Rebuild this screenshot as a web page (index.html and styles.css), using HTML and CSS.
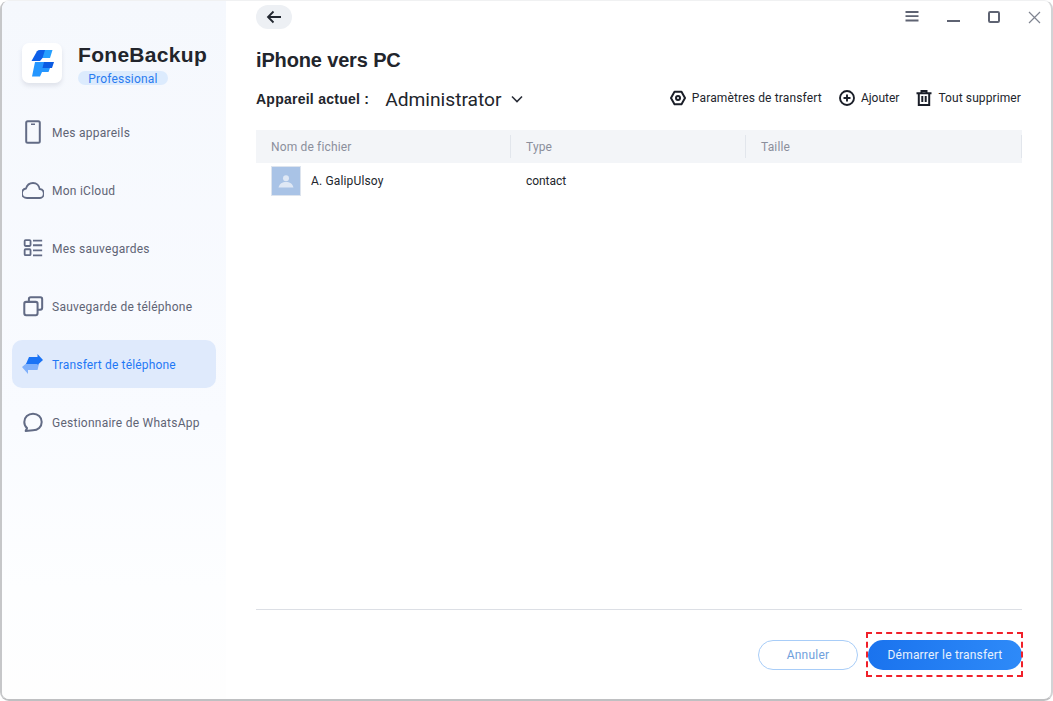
FILE: index.html
```html
<!DOCTYPE html>
<html lang="fr">
<head>
<meta charset="utf-8">
<title>FoneBackup</title>
<link rel="stylesheet" href="styles.css">
</head>
<body>
<div class="window">
  <aside class="sidebar">
    <div class="brand">
      <div class="logo">
        <svg width="24" height="30" viewBox="0 0 24 30">
          <path d="M11 2H22.500L20 10H8Z" fill="#27a0ff"/>
          <path d="M7 3.200Q8 2 10 2H15L12.500 10L10 13H1.500Z" fill="#0d5fe8"/>
          <path d="M13 14H24L22 20H11Z" fill="#0b5be2"/>
          <path d="M5 14H14L12.500 20H20L18.500 24H12L10 28.500H2Z" fill="#2496ff"/>
        </svg>
      </div>
      <div class="brand-text">
        <div class="brand-name">FoneBackup</div>
        <div class="badge">Professional</div>
      </div>
    </div>
    <nav class="nav">
      <a class="nav-item">
        <svg class="nav-icon" viewBox="0 0 20 24"><rect x="3.200" y="1.200" width="13.600" height="21.600" rx="1.500" fill="none" stroke="#626b85" stroke-width="2"/><path d="M8 4.200h4" stroke="#626b85" stroke-width="1.600"/></svg>
        <span>Mes appareils</span>
      </a>
      <a class="nav-item">
        <svg class="nav-icon" viewBox="1 0 22 24"><path d="M6 20C3 20 1 18 1 15.500C1 12.500 3 10.800 5 10.500C6 7 8.600 5 12 5C15.600 5 18.200 7.600 18.600 11C21 11.200 22.800 13 22.800 15.500C22.800 18 21 20 19 20Z" fill="none" stroke="#626b85" stroke-width="1.800"/></svg>
        <span>Mon iCloud</span>
      </a>
      <a class="nav-item">
        <svg class="nav-icon" viewBox="0 0 24 24"><g fill="none" stroke="#626b85" stroke-width="2"><rect x="2.900" y="3.400" width="6.400" height="6.400" rx="1"/><rect x="2.900" y="13.400" width="6.400" height="6.400" rx="1"/><path d="M12 3.900h10M12 9h10M12 14.500h10M12 20h10"/></g></svg>
        <span>Mes sauvegardes</span>
      </a>
      <a class="nav-item">
        <svg class="nav-icon" viewBox="0 0 24 24"><g fill="none" stroke="#626b85" stroke-width="2.200"><rect x="2.500" y="7.500" width="14.500" height="14.500" rx="2"/><path d="M7.500 7.500V4.500a2 2 0 0 1 2-2H20a2 2 0 0 1 2 2V14a2 2 0 0 1-2 2H17"/></g></svg>
        <span>Sauvegarde de téléphone</span>
      </a>
      <a class="nav-item active">
        <svg class="nav-icon" viewBox="0 0 22 24"><path d="M0 15L6 10V12H17L15.500 18H6V22Z" fill="#7fb0fb"/><path d="M7 5H15.500V2L21 8L15.500 13V12H4Z" fill="#1a73f5"/></svg>
        <span>Transfert de téléphone</span>
      </a>
      <a class="nav-item">
        <svg class="nav-icon" viewBox="0 0 24 24"><path d="M5.500 18.500C3.500 16.900 2.500 14.600 2.500 12C2.500 6.800 6.700 3 12 3C17.300 3 21.500 6.800 21.500 12C21.500 17.200 17.300 21 12 21L4 21.800Z" fill="none" stroke="#626b85" stroke-width="2.200" stroke-linejoin="round"/></svg>
        <span>Gestionnaire de WhatsApp</span>
      </a>
    </nav>
  </aside>
  <main class="main">
    <div class="topbar">
      <button class="back" aria-label="Retour">
        <svg width="16" height="14" viewBox="0 0 16 14"><path d="M15 7H2M7.500 1.500L2 7l5.500 5.500" fill="none" stroke="#222730" stroke-width="1.800"/></svg>
      </button>
      <div class="win-controls">
        <svg width="14" height="11" viewBox="0 0 14 11"><path d="M0.500 1h13M0.500 5.200h13M0.500 9.500h13" stroke="#5e6372" stroke-width="1.800"/></svg>
        <svg width="13" height="11" viewBox="0 0 13 11"><path d="M0 10h13" stroke="#5e6372" stroke-width="1.800"/></svg>
        <svg width="12" height="12" viewBox="0 0 12 12"><rect x="1" y="1" width="10" height="10" rx="1.200" fill="none" stroke="#5e6372" stroke-width="2"/></svg>
        <svg width="13" height="13" viewBox="0 0 13 13"><path d="M1 1l11 11M12 1L1 12" stroke="#7f8490" stroke-width="1.200"/></svg>
      </div>
    </div>
    <h1 class="title">iPhone vers PC</h1>
    <div class="toolbar">
      <span class="device-label">Appareil actuel :</span>
      <span class="device-name">Administrator</span>
      <svg class="chevron" width="12" height="8" viewBox="0 0 12 8"><path d="M1 1.500l5 5 5-5" fill="none" stroke="#2a2e38" stroke-width="1.600"/></svg>
      <div class="actions">
        <span class="action action-wide">
          <svg width="16" height="16" viewBox="0 0 16 16"><path d="M4.500 1.800h7L15 8l-3.500 6.200h-7L1 8Z" fill="none" stroke="#1a1e28" stroke-width="2" stroke-linejoin="round"/><circle cx="8" cy="8" r="2" fill="none" stroke="#1a1e28" stroke-width="2"/></svg>
          Paramètres de transfert
        </span>
        <span class="action action-tight">
          <svg width="16" height="16" viewBox="0 0 16 16"><circle cx="8" cy="8" r="7" fill="none" stroke="#1a1e28" stroke-width="1.900"/><path d="M4.500 8h7M8 4.500v7" stroke="#1a1e28" stroke-width="1.900"/></svg>
          Ajouter
        </span>
        <span class="action">
          <svg width="16" height="16" viewBox="0 0 16 16"><path d="M0.500 3.200h15M5.500 3V1h5v2M2.800 3.500V15h10.400V3.500M6.300 6v6M9.700 6v6" fill="none" stroke="#1a1e28" stroke-width="2"/></svg>
          Tout supprimer
        </span>
      </div>
    </div>
    <div class="table">
      <div class="table-head">
        <div class="col col-name"><span class="nudge">Nom de fichier</span></div>
        <div class="col col-type"><span class="nudge">Type</span></div>
        <div class="col col-size"><span class="nudge">Taille</span></div>
      </div>
      <div class="table-row">
        <div class="cell col-name">
          <div class="avatar">
            <svg width="30" height="30" viewBox="0 0 30 30"><rect width="30" height="30" fill="#a9c3e6"/><circle cx="15" cy="12" r="3.200" fill="#dfe8f5"/><path d="M7 22c1-4.500 4-6 8-6s7 1.500 8 6Z" fill="#dfe8f5"/></svg>
          </div>
          <span class="contact-name">A. GalipUlsoy</span>
        </div>
        <div class="cell col-type type-cell">contact</div>
        <div class="cell col-size"></div>
      </div>
    </div>
    <div class="footer">
      <button class="btn btn-ghost">Annuler</button>
      <button class="btn btn-primary">Démarrer le transfert<span class="highlight"></span></button>
    </div>
  </main>
</div>
</body>
</html>
```
FILE: styles.css
```css
* { box-sizing: border-box; }
html, body { margin: 0; height: 100%; background: #fff; }
body { font-family: Roboto, "Liberation Sans", sans-serif; color: #1f2430; }
.window {
  width: 1053px; height: 701px;
  display: flex;
  background: #fff;
  border-left: 2px solid #c6c7c9;
  border-right: 2px solid #d2d3d5;
  border-bottom: 2px solid #bfc0c2;
  border-top: 1px solid #f0f1f2;
  border-radius: 9px;
  overflow: hidden;
}
.sidebar {
  width: 224px; flex: none;
  padding: 42px 10px 0;
  background: linear-gradient(180deg, #f5f8fd 0%, #f9fbff 60%, #fdfeff 84%, #fefefe 100%);
}
.brand { display: flex; align-items: flex-start; gap: 16px; padding-left: 10px; height: 65px; }
.logo {
  width: 40px; height: 40px; flex: none;
  display: flex; align-items: center; justify-content: center;
  background: #fff; border-radius: 7px;
  box-shadow: 0 3px 4px rgba(120,130,150,.18);
}
.brand-text { display: flex; flex-direction: column; align-items: flex-start; }
.brand-name { font-family: "Liberation Sans", sans-serif; font-size: 21px; font-weight: 700; letter-spacing: .3px; line-height: 26px; margin-top: -1px; color: #22252c; }
.badge {
  width: 90px; height: 14px; margin-top: 3px;
  background: #dcebfd; border-radius: 7px;
  color: #2a7bf0; font-size: 12px; line-height: 17px; text-align: center; letter-spacing: .2px;
}
.nav { display: flex; flex-direction: column; gap: 10px; }
.nav-item {
  height: 48px; width: 204px;
  display: flex; align-items: center; gap: 8px;
  padding-left: 10px; border-radius: 10px;
  color: #5f6475; font-size: 12px; letter-spacing: .25px;
}
.nav-item span { padding-top: 2px; }
.nav-item.active { background: #dfeafc; color: #1f78f5; letter-spacing: .15px; }
.nav-icon { width: 22px; height: 24px; flex: none; }
.main { flex: 1; display: flex; flex-direction: column; padding: 0 29px 0 30px; min-width: 0; }
.topbar { display: flex; justify-content: space-between; height: 28px; padding-top: 4px; }
.back {
  width: 36px; height: 24px; padding: 0; border: 0;
  border-radius: 12px; background: #edf0f4;
  display: flex; align-items: center; justify-content: center;
}
.win-controls {
  display: flex; align-items: flex-start; gap: 28px;
  margin-right: -19px; padding-top: 6px;
}
.title { margin: 18px 0 0; font-family: "Liberation Sans", sans-serif; font-size: 20px; font-weight: 700; letter-spacing: -.15px; line-height: 26px; color: #22252c; }
.toolbar { display: flex; align-items: center; margin-top: 14px; height: 24px; }
.device-label { font-family: "Liberation Sans", sans-serif; font-size: 14px; font-weight: 700; letter-spacing: .25px; color: #22252c; }
.device-name { font-size: 19.2px; margin-left: 16px; color: #22252c; }
.chevron { margin-left: 9px; margin-top: -1px; }
.actions { margin-left: auto; display: flex; gap: 17px; margin-top: -2px; margin-right: 1px; }
.action { display: flex; align-items: center; gap: 6px; font-size: 12px; letter-spacing: .1px; color: #22252c; }
.action-wide { letter-spacing: .15px; }
.action-tight { letter-spacing: 0; }
.table { margin-top: 19px; }
.table-head { display: flex; height: 33px; background: #f3f5f8; color: #8b8f9c; font-size: 12px; letter-spacing: .15px; align-items: center; }
.col { height: 23px; line-height: 23px; border-right: 1px solid #e2e6ec; padding-left: 15px; }
.nudge { position: relative; top: 1px; }
.col-name { width: 255px; }
.col-type { width: 235px; }
.col-size { width: 276px; }
.table-row { display: flex; height: 36px; align-items: center; font-size: 12px; color: #22252c; }
.cell { display: flex; align-items: center; gap: 10px; padding-left: 15px; }
.contact-name { letter-spacing: .15px; }
.type-cell { letter-spacing: -.05px; }
.avatar { width: 30px; height: 30px; flex: none; border: 1px solid #dde4ee; display: flex; align-items: center; justify-content: center; overflow: hidden; }
.footer {
  margin-top: auto; height: 90px;
  border-top: 1px solid #dcdfe5;
  display: flex; justify-content: flex-end; align-items: flex-start;
  gap: 10px; padding-top: 30px;
}
.btn { height: 30px; border-radius: 15px; font-family: Roboto, sans-serif; font-size: 12px; letter-spacing: .2px; padding: 0; }
.btn-ghost { width: 100px; background: #fff; border: 1px solid #a8cdf8; color: #6f9fdc; }
.btn-primary { position: relative; width: 154px; border: 0; color: #e8f1fd; background: linear-gradient(90deg, #1a73ee, #2e8af8); }
.highlight {
  position: absolute; left: -2px; top: -8px; right: -1px; bottom: -7px;
  border: 2px dashed #f0202a;
}
```
